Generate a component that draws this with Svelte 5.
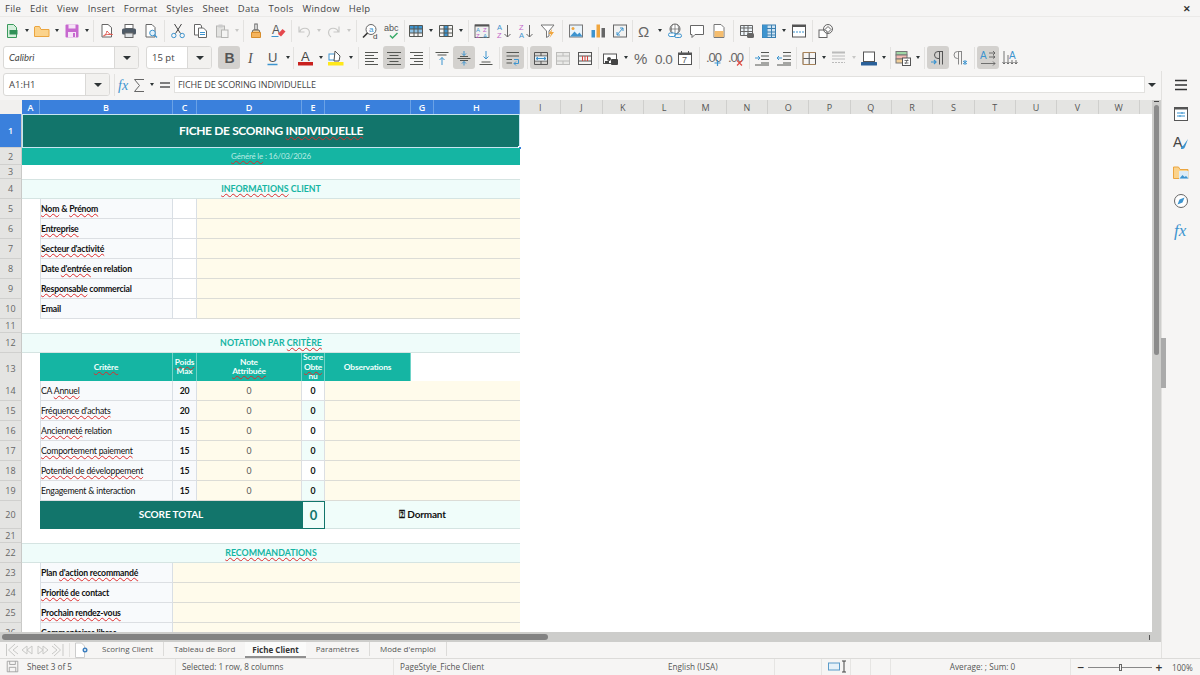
<script>
	const menus = ["File", "Edit", "View", "Insert", "Format", "Styles", "Sheet", "Data", "Tools", "Window", "Help"]

	const blue = "#3d94cf"
	const dark = "#555753"
	const lines = (x1, x2, ys, c = dark) => ys.map((y) => `<path d="M${x1} ${y}H${x2}" stroke="${c}"/>`).join("")
	const table = (c = dark) =>
		`<path d="M1.5 2.5h13v11h-13zM1.5 6h13M1.5 10h13M6 2.5v11M10 2.5v11" fill="none" stroke="${c}"/>`

	const icons = {
		new: `<path d="M3.5 1.5h6l3 3v10h-9z" fill="#d5efdc" stroke="#3a9a5c"/><rect x="5.5" y="7" width="8" height="4.5" fill="#2f9157"/>`,
		open: `<path d="M.5 4V13.5H15V6.5H7L5.5 3.5H1z" fill="#fbd38c" stroke="#eba53f"/>`,
		save: `<rect x="1.5" y="1.5" width="13" height="13" rx="1" fill="#c768cf"/><rect x="4.5" y="1.5" width="7" height="4" fill="#f6e4f7"/><rect x="4" y="9" width="8" height="5.5" fill="#f6e4f7"/><rect x="9" y="10" width="2" height="4" fill="#c768cf"/>`,
		pdf: `<path d="M3 1.5h6l3.5 3v9.5H3z" fill="#fff" stroke="#666"/><path d="M8 8c-1 4-3 5.500-3.500 5 0-1 4-2 9-1.500-2 .5-4-1.500-5.500-3.500" fill="none" stroke="#e0564e"/>`,
		print: `<rect x="4" y="1.500" width="8" height="4" fill="#fff" stroke="#666"/><rect x="1" y="5.500" width="14" height="6" rx="1.500" fill="#4e5a66"/><rect x="4" y="10" width="8" height="4.500" fill="#dfe3e6" stroke="#666"/>`,
		preview: `<path d="M3 1.500h6l3 3v9.500H3z" fill="#fff" stroke="#666"/><circle cx="9.500" cy="10" r="2.800" fill="#e3f1fa" stroke="${blue}"/><path d="M11.500 12l2.500 2.500" stroke="${blue}" stroke-width="1.300"/>`,
		cut: `<path d="M4.500 1l6 9.500M11.500 1l-6 9.500" stroke="#444" fill="none"/><circle cx="3.800" cy="12.500" r="2.200" fill="none" stroke="${blue}"/><circle cx="12.200" cy="12.500" r="2.200" fill="none" stroke="${blue}"/>`,
		copy: `<path d="M2.500 1.500h6l1 1.500v9h-7z" fill="#fff" stroke="#666"/><path d="M6.500 5h5l3 3v6.500h-8z" fill="#fff" stroke="#666"/>${lines(8, 13, [9.500, 11.500], blue)}`,
		paste: `<rect x="2.500" y="3" width="8" height="11" fill="#e3e3e1" stroke="#b5b5b3"/><rect x="4.500" y="1.500" width="4" height="3" fill="#ccc"/><rect x="7.500" y="7" width="6.500" height="7.500" fill="#f4f4f3" stroke="#b5b5b3"/>`,
		clone: `<rect x="6.800" y="1" width="2.400" height="6" fill="#fff" stroke="#666"/><path d="M5 7h6l1 2.500H4z" fill="#f0c98a" stroke="#666"/><path d="M3.500 9.500h9v5h-9z" fill="#f5b45c" stroke="#d78d2c"/>`,
		clear: `<text x="2" y="11" font-size="12" fill="#555">A</text><path d="M1.500 13.500h7" stroke="${blue}"/><path d="M8 11l4.500-5 3 2.500-4.500 5z" fill="#e5484d"/>`,
		undo: `<path d="M4 8.500c1-4 9-5 9.500 1 0 2-1 3.500-2.500 4.500M3 3.500V9h5.500" fill="none" stroke="#c8c8c6" stroke-width="1.200"/>`,
		redo: `<path d="M12 8.500c-1-4-9-5-9.500 1 0 2 1 3.500 2.500 4.500M13 3.500V9H7.500" fill="none" stroke="#c8c8c6" stroke-width="1.200"/>`,
		find: `<circle cx="9" cy="6.500" r="5" fill="#fff" stroke="#666"/><path d="M5.500 10L1 14.500" stroke="#333" stroke-width="1.600"/><text x="7" y="9" font-size="8" fill="${blue}">a</text><text x="11" y="15.500" font-size="8" fill="#444">d</text>`,
		spell: `<text x="0" y="8" font-size="9" fill="#555">abc</text><path d="M6 12.500l2.500 2.500 5-5" fill="none" stroke="#3bab6a" stroke-width="1.500"/>`,
		rows: `<rect x="1.500" y="6" width="13" height="4" fill="#8ec2e6"/><rect x="1.500" y="2.500" width="13" height="3.500" fill="${blue}"/>${table()}`,
		columns: `<rect x="6" y="2.500" width="4" height="11" fill="${blue}"/>${table()}`,
		sort: `<rect x="1" y="2" width="14" height="12.500" fill="#f1f1f0" stroke="#666"/><rect x="1" y="1.500" width="14" height="2" fill="#555"/><text x="2" y="9" font-size="6" fill="#3d94cf">A</text><text x="2" y="14.500" font-size="6" fill="#c264c8">Z</text><text x="9" y="9" font-size="6" fill="#c264c8">Z</text><text x="9" y="14.500" font-size="6" fill="#3d94cf">A</text>`,
		asc: `<text x="1" y="7" font-size="7.500" fill="${blue}">A</text><text x="1" y="15" font-size="7.500" fill="#c264c8">Z</text><path d="M11.500 2v12M8.500 11l3 3 3-3" fill="none" stroke="#666"/>`,
		desc: `<text x="1" y="7" font-size="7.500" fill="#c264c8">Z</text><text x="1" y="15" font-size="7.500" fill="${blue}">A</text><path d="M11.500 2v12M8.500 11l3 3 3-3" fill="none" stroke="#666"/>`,
		filter: `<path d="M1 2h13L9 8v5l-2.500 1.500V8z" fill="#fff" stroke="#777"/><path d="M12 6l-3.500 5h2.500l-1.500 4 4.500-6h-2.500z" fill="#f0a63f"/>`,
		image: `<rect x="1.500" y="2" width="13" height="12" fill="#eaf4fb" stroke="#777"/><circle cx="5" cy="5.500" r="1.500" fill="#f0a63f"/><path d="M2 13.500l4.500-5 3 3 2-2 3 4z" fill="${blue}"/>`,
		chart: `<rect x="1.500" y="7" width="3.500" height="7.500" fill="${blue}"/><rect x="6.500" y="1.500" width="3.500" height="13" fill="#f0a63f"/><rect x="11.500" y="5" width="3.500" height="9.500" fill="#666"/>`,
		pivot: `<rect x="1.500" y="2" width="13" height="12" fill="#f2f2f1" stroke="#666"/><path d="M5 12l6-7M11 5H8M11 5v3M5 12h3M5 12V9" fill="none" stroke="${blue}"/>`,
		omega: `<text x="1" y="14" font-size="15" fill="#666">Ω</text>`,
		link: `<circle cx="8" cy="6" r="5" fill="#fff" stroke="#666"/><path d="M3 6h10M8 1v10M5.500 1.500c-1.500 3-1.500 6 0 9M10.500 1.500c1.500 3 1.500 6 0 9" fill="none" stroke="#666" stroke-width=".7"/><rect x="1.500" y="10" width="7" height="3.500" rx="1.700" fill="#fff" stroke="${blue}"/><rect x="7.500" y="11" width="7" height="3.500" rx="1.700" fill="none" stroke="${blue}"/>`,
		comment: `<path d="M1.500 2.500h13v9H6l-3 3v-3H1.500z" fill="#fff" stroke="#666"/>`,
		headers: `<path d="M3 1.500h7l3 3v10H3z" fill="#fff" stroke="#777"/><rect x="3.500" y="8" width="9" height="6" fill="#f5bd6e"/>`,
		freeze: `<path d="M1.500 2.500h12v10h-12zM1.500 5h12M1.500 8.500h12M5 2.500v10M9 2.500v10" fill="#eef6fb" stroke="#666"/><rect x="8" y="10" width="7" height="5" rx="1.500" fill="#666"/>`,
		freeze2: `<rect x="1.500" y="2" width="13" height="12.500" fill="#cfe4f3" stroke="#3a7fb0"/><path d="M1.500 5.500h13M1.500 9h13M1.500 12h13M6 2v12.500M10.500 2v12.500" stroke="#3a7fb0" fill="none"/><rect x="1.500" y="2" width="4.500" height="12.500" fill="#3d94cf"/>`,
		split: `<rect x="1.500" y="2" width="13" height="12" fill="#fff" stroke="#555"/><rect x="1.500" y="2" width="13" height="2" fill="#555"/><path d="M2 9h12" stroke="${blue}" stroke-dasharray="2 1"/>`,
		shapes: `<rect x="1" y="7" width="8" height="7.500" fill="#fff" stroke="#666"/><circle cx="10" cy="6" r="4.500" fill="none" stroke="#666"/><path d="M10 3.500l3 3-3 3-3-3z" fill="#fff" stroke="#666"/>`,

		bold: `<text x="3.500" y="13" font-size="14" font-weight="700" fill="#555">B</text>`,
		italic: `<text x="5" y="13" font-size="14" font-style="italic" font-family="Liberation Serif" fill="#555">I</text>`,
		under: `<text x="3" y="12" font-size="13" fill="#555">U</text><path d="M2.500 14.500h10" stroke="${blue}" stroke-width="1.500"/>`,
		fcolor: `<text x="3" y="11" font-size="13" fill="#444">A</text><rect x="0" y="12" width="15" height="3.500" fill="#c9211e"/>`,
		bg: `<rect x="0" y="12" width="15.500" height="3.500" fill="#ffe81a"/><rect x="1" y="4" width="6" height="6" fill="#fff" stroke="${blue}"/><path d="M7 1l5 5-1 5H6z" fill="#fff" stroke="#555"/>`,
		left: lines(1, 14, [2.500, 8.500, 14.500]) + lines(1, 10, [5.500, 11.500]),
		center: lines(1, 15, [2.500, 8.500, 14.500]) + lines(3.500, 12.500, [5.500, 11.500]),
		right: lines(2, 15, [2.500, 8.500, 14.500]) + lines(6, 15, [5.500, 11.500]),
		top: lines(1.500, 14.500, [2.500]) + lines(3.500, 12.500, [5]) + `<path d="M8 15V7.500M5.500 10L8 7.500l2.500 2.500" fill="none" stroke="${blue}"/>`,
		mid: lines(1.500, 14.500, [8.500]) + lines(4, 12, [6.500, 10.500]) + `<path d="M8 1v4.500M6 3.500l2 2 2-2M8 15.500v-4M6 13.500l2-2 2 2" fill="none" stroke="${blue}"/>`,
		bot: lines(1.500, 14.500, [14.500]) + lines(3.500, 12.500, [12]) + `<path d="M8 1v8M5.500 6.500L8 9l2.500-2.500" fill="none" stroke="${blue}"/>`,
		wrap: lines(1.500, 14, [2.500, 6]) + lines(1.500, 7, [9.500, 13]) + `<path d="M9 9.500h4.500v4H9M11 11.500l-2 2 2 2" fill="none" stroke="${blue}"/>`,
		merge: `<path d="M1.500 2.500h13v12h-13zM1.500 6h13M1.500 11h13M8 2.500V6M8 11v3.500" fill="none" stroke="#555"/><rect x="2" y="6.500" width="12" height="4" fill="#e9f3fa"/><path d="M3 8.500h10M5 7l-2 1.500L5 10M11 7l2 1.500L11 10" stroke="${blue}" fill="none"/>`,
		merge2: `<rect x="1.500" y="2.500" width="13" height="12" fill="#e9e9e7" stroke="#bcbcba"/><path d="M1.500 6h13M1.500 11h13M8 2.500V6M8 11v3.500" stroke="#bcbcba"/>`,
		unmerge: `<rect x="1.500" y="2.500" width="13" height="12" fill="none" stroke="#555"/><path d="M1.500 6h13M1.500 11h13" stroke="#555"/><path d="M5.500 6v5M8 6v5M10.500 6v5" stroke="#d9423b"/>`,
		cur: `<rect x=".5" y="4" width="13" height="9.500" fill="#fff" stroke="#555"/><circle cx="6" cy="9" r="2" fill="#444"/><rect x="8" y="9" width="7" height="6" rx="1" fill="#444"/><rect x="2" y="11" width="4" height="3" fill="#444"/>`,
		pct: `<text x="1" y="14" font-size="15" font-weight="300" fill="#666">%</text>`,
		zero: `<text x="0" y="14" font-size="13.500" letter-spacing="-.5" fill="#666">0.0</text>`,
		date: `<rect x="1.500" y="3" width="13" height="11.500" fill="#fff" stroke="#555"/><rect x="1.500" y="3" width="13" height="2" fill="#555"/><path d="M4.500 1v3M11.500 1v3" stroke="#555"/><text x="5" y="13" font-size="9" fill="#555">7</text>`,
		add: `<text x="0" y="12" font-size="13" letter-spacing="-1" fill="#666">.00</text><path d="M11.500 10v6M8.500 13h6" stroke="${blue}" stroke-width="1.200"/>`,
		del: `<text x="0" y="12" font-size="13" letter-spacing="-1" fill="#666">.00</text><path d="M9 10.500l5 5M14 10.500l-5 5" stroke="#e04b44" stroke-width="1.200"/>`,
		indent: lines(7, 15, [2.500, 6, 9.500, 13]) + lines(1, 15, [15]) + `<path d="M1 8h5M4 6l2 2-2 2" fill="none" stroke="${blue}"/>`,
		outdent: lines(7, 15, [2.500, 6, 9.500, 13]) + lines(1, 15, [15]) + `<path d="M6 8H1M3 6L1 8l2 2" fill="none" stroke="${blue}"/>`,
		borders: `<path d="M2 2.500h12.500v12H2zM8.200 2.500v12M2 8.500h12.500" fill="none" stroke="#555"/><path d="M2 2.500h12.500M2 14.500h12.500M2 2.500v12" stroke="#e0a25b" fill="none" opacity=".6"/>`,
		bstyle: `<path d="M1 2.500h13" stroke="#bbb" stroke-width="2"/><path d="M1 6h13M1 9h13" stroke="#bbb"/><path d="M1 12.500h13" stroke="#bbb" stroke-dasharray="2 1"/>`,
		bcolor: `<rect x="2.500" y="2" width="11" height="9.500" fill="#fff" stroke="#555"/><rect x="0" y="12" width="16" height="3.500" rx=".5" fill="#2a6099"/>`,
		cond: `<rect x="1" y="1.500" width="11" height="3.500" fill="#9fd6a5" stroke="#777"/><rect x="1" y="5" width="11" height="4" fill="#f3b9b3" stroke="#777"/><rect x="1" y="9" width="8" height="4" fill="#f1cf9a" stroke="#777"/><rect x="7.500" y="8" width="8" height="7.500" fill="#fff" stroke="#555"/><path d="M9.500 10.500h4M9.500 13h4M12.500 9.500l-2 4.500" stroke="#555" fill="none" stroke-width=".8"/>`,
		ltr: `<path d="M13 1.500H8a3.500 3.500 0 0 0 0 7h1M9.500 1.500v13M12.500 1.500v13" fill="none" stroke="#555"/><path d="M1 12h5M4 10l2 2-2 2" fill="none" stroke="${blue}" stroke-width="1.200"/>`,
		rtl: `<path d="M10 1.500H5.500a3.500 3.500 0 0 0 0 7h1M6.500 1.500v13M9.500 1.500v13" fill="none" stroke="#888"/><path d="M11 11l4 3M15 11l-4 3M13 10v5" stroke="${blue}"/>`,
		hor: `<text x="0" y="9" font-size="10" fill="${blue}">A</text><path d="M9 3h6M13 1l2 2-2 2M9 7h6M13 5.500l2 1.500-2 1.500M1 13.500h14M13 11.500l2 2-2 2" fill="none" stroke="#555" stroke-width=".8"/>`,
		ver: `<text x="7" y="9" font-size="10" fill="${blue}">A</text><path d="M2 1v13M.5 12L2 14l1.500-2M6 5v9M4.500 12L6 14l1.500-2M10 10v4M8.500 12l1.500 2 1.500-2M14 10v4M12.500 12l1.500 2 1.500-2" fill="none" stroke="#555" stroke-width=".8"/>`,

		fx: `<text x="1" y="13" font-size="14" font-style="italic" font-family="Liberation Serif" fill="${blue}">fx</text>`,
		sum: `<path d="M13 2.500H3.500L8.500 8.500l-5 6H13" fill="none" stroke="#666"/>`,
		eq: `<path d="M3 6h10M3 10h10" stroke="#555" stroke-width="1.300"/>`,
		menu: `<path d="M2 3.500h12M2 8h12M2 12.500h12" stroke="#333" stroke-width="1.400"/>`,
		props: `<rect x="1.500" y="1.500" width="13" height="13" fill="#fff" stroke="#555"/><rect x="1.500" y="1.500" width="13" height="2" fill="#555"/><path d="M4 7h8M4 10h8" stroke="${blue}"/><path d="M9 6v2M7 9v2" stroke="${blue}"/>`,
		styles: `<text x="0" y="12" font-size="14" fill="#444">A</text><path d="M8 14c0-3 1-3 2-3l5-7-3 8c-1 2-2 2-4 2" fill="${blue}"/>`,
		gallery: `<path d="M.5 3v11.500H15V5.500H7L5.500 3z" fill="#fbd38c" stroke="#eba53f"/><rect x="6" y="7" width="9.500" height="8" fill="#dcecf7"/><path d="M6.500 14.500l3-3.500 2 2 1.500-1 2.500 2.500z" fill="${blue}"/>`,
		nav: `<circle cx="8" cy="8" r="6.500" fill="#fff" stroke="#666"/><path d="M11.500 4.500L9.500 9.500 4.500 11.500 6.500 6.500z" fill="${blue}"/>`,
		fxs: `<text x="1" y="14" font-size="17" font-style="italic" font-family="Liberation Serif" fill="${blue}">fx</text>`,
	}

	const tb1 = [
		"new", "dd", "open", "dd", "save", "dd", 5, "pdf", "print", "preview", 5, "cut", "copy", "paste", "dx", 4,
		"clone", "clear", 4, "undo", "dx", "redo", "dx", 6, "find", "spell", 2, "rows", "dd", "columns", "dd", 6,
		"sort", "asc", "desc", "filter", 6, "image", "chart", "pivot", 3, "omega", "dd", "link", "comment", "headers", 6,
		"freeze", "freeze2", "dd", "split", 5, "shapes",
	]
	const tb2 = [
		"bold", "italic", "under", "dd", 3, "fcolor", "dd", "bg", "dd", 6, "left", "center", "right", 4, "top", "mid", "bot", 5,
		"wrap", 6, "merge", "merge2", "unmerge", 4, "cur", "dd", "pct", "zero", "date", 7, "add", "del", 4, "indent", "outdent", 3,
		"borders", "dd", "bstyle", "dx", "bcolor", "dd", 4, "cond", "dd", 5, "ltr", "rtl", 6, "hor", "ver",
	]
	const active = ["bold", "center", "mid", "wrap", "merge", "ltr", "hor"]
	const sideIcons = ["props", "styles", "gallery", "nav", "fxs"]

	const cols = [
		["A", 18], ["B", 133], ["C", 24], ["D", 105], ["E", 23], ["F", 86], ["G", 23], ["H", 86],
	]
	const restCols = "IJKLMNOPQRSTUVW".split("")

	const section = (n, t) => ({ n, h: 20, cells: [{ s: 8, k: "section", t }] })
	const blank = (n) => ({ n, h: 14, cells: [] })
	const info = (n, t) => ({
		n, h: 20,
		cells: [{ s: 1 }, { s: 1, k: "label bold", t }, { s: 1, k: "plain" }, { s: 5, k: "entry" }],
	})
	const crit = (n, t, max) => ({
		n, h: 20,
		cells: [
			{ s: 1 },
			{ s: 1, k: "label", t },
			{ s: 1, k: "label num", t: max },
			{ s: 1, k: "entry mid", t: "0" },
			{ s: 1, k: n % 2 ? "score" : "score odd", t: "0" },
			{ s: 3, k: "entry" },
		],
	})
	const reco = (n, t) => ({
		n, h: 20,
		cells: [{ s: 1 }, { s: 1, k: "label bold", t }, { s: 6, k: "entry" }],
	})

	const rows = [
		{ n: 1, h: 34, sel: true, cells: [{ s: 8, k: "title", t: "FICHE DE SCORING ~INDIVIDUELLE~" }] },
		{ n: 2, h: 17, cells: [{ s: 8, k: "dated", t: "~Généré le~ : 16/03/2026" }] },
		blank(3),
		section(4, "~INFORMATIONS~ CLIENT"),
		info(5, "~Nom~ & ~Prénom~"),
		info(6, "~Entreprise~"),
		info(7, "~Secteur d'activité~"),
		info(8, "Date ~d'entrée~ en relation"),
		info(9, "~Responsable~ commercial"),
		info(10, "Email"),
		blank(11),
		section(12, "NOTATION PAR ~CRITÈRE~"),
		{
			n: 13, h: 28,
			cells: [
				{ s: 1 },
				{ s: 1, k: "head", t: "~Critère~" },
				{ s: 1, k: "head", t: "~Poids~\nMax" },
				{ s: 1, k: "head", t: "Note\n~Attribuée~" },
				{ s: 1, k: "head", t: "Score\n~Obte~\n~nu~" },
				{ s: 1, k: "head", t: "Observations" },
			],
		},
		crit(14, "CA ~Annuel~", "20"),
		crit(15, "~Fréquence d'achats~", "20"),
		crit(16, "~Ancienneté~ relation", "15"),
		crit(17, "~Comportement paiement~", "15"),
		crit(18, "~Potentiel de développement~", "15"),
		crit(19, "Engagement & interaction", "15"),
		{
			n: 20, h: 28,
			cells: [
				{ s: 1 },
				{ s: 3, k: "total", t: "SCORE TOTAL" },
				{ s: 1, k: "totalScore", t: "0" },
				{ s: 3, k: "rating", t: "⍰ Dormant" },
			],
		},
		blank(21),
		section(22, "~RECOMMANDATIONS~"),
		reco(23, "Plan ~d'action recommandé~"),
		reco(24, "~Priorité de~ contact"),
		reco(25, "~Prochain rendez-vous~"),
		reco(26, "Commentaires libres"),
	]

	const tabs = ["Scoring Client", "Tableau de Bord", "Fiche Client", "Paramètres", "Mode d'emploi"]
</script>

{#snippet bar(items)}
	{#each items as it}
		{#if typeof it === "number"}
			<span class="sep" style="width:{it}px"></span>
		{:else if it === "dd"}
			<span class="dd"></span>
		{:else if it === "dx"}
			<span class="dd off"></span>
		{:else}
			<span class="btn" class:on={active.includes(it)}>
				<svg width="16" height="16" viewBox="0 0 16 16">{@html icons[it]}</svg>
			</span>
		{/if}
	{/each}
{/snippet}

{#snippet txt(s)}
	{#each s.split("~") as part, i}
		{#if i % 2}<span class="wavy">{part}</span>{:else}{part}{/if}
	{/each}
{/snippet}

<div class="app">
	<div class="menubar">
		{#each menus as m}<span>{m}</span>{/each}
		<span class="close">✕</span>
	</div>

	<div class="toolbar first">
		{@render bar(tb1)}
	</div>

	<div class="toolbar second">
		<div class="combo font"><span class="value">Calibri</span><span class="arrow"></span></div>
		<div class="combo size"><span class="value">15 pt</span><span class="arrow"></span></div>
		{@render bar(tb2)}
	</div>

	<div class="body">
		<div class="workspace">
			<div class="formula">
				<div class="combo name"><span class="value">A1:H1</span><span class="arrow"></span></div>
				<span class="sep formula-sep"></span>
				<svg class="fbtn" width="16" height="16" viewBox="0 0 16 16">{@html icons.fx}</svg>
				<svg class="fbtn" width="16" height="16" viewBox="0 0 16 16">{@html icons.sum}</svg>
				<span class="dd small"></span>
				<svg class="fbtn" width="16" height="16" viewBox="0 0 16 16">{@html icons.eq}</svg>
				<div class="fx-input">FICHE DE SCORING INDIVIDUELLE</div>
				<span class="dd wide"></span>
			</div>

			<div class="viewport">
				<div class="sheet">
					<div class="colhead">
						<span class="corner"></span>
						{#each cols as [c, w]}
							<span class="col sel" style="width:{w}px">{c}</span>
						{/each}
						{#each restCols as c}
							<span class="col rest">{c}</span>
						{/each}
					</div>

					{#each rows as r}
						<div class="row" style="height:{r.h}px">
							<span class="rh" class:sel={r.sel}>{r.n}</span>
							{#each r.cells as c}
								<div class="cell {c.k ?? ''}" style="grid-column:span {c.s}">
									{#if c.t}<span class="t">{@render txt(c.t)}</span>{/if}
								</div>
							{/each}
							{#if r.sel}<span class="handle"></span>{/if}
						</div>
					{/each}
				</div>
				<div class="vscroll"><span class="tick"></span><span class="vthumb"></span></div>
			</div>

			<div class="hscroll"><span class="hthumb"></span><span class="hend"></span></div>

			<div class="tabbar">
				<svg class="tabnav" width="60" height="16" viewBox="0 0 60 16">
					<g fill="none" stroke="#c9c9c7">
						<path d="M1.500 2v12M10 2L3.500 8l6.500 6M13 4L8 8l5 4" />
						<path d="M22 4l-5 4 5 4zM27 4l-5 4 5 4z" />
						<path d="M33 4l5 4-5 4zM38 4l5 4-5 4z" />
						<path d="M49 2l6.500 6-6.500 6M47 4l5 4-5 4M58 2v12" />
					</g>
				</svg>
				<span class="sep tabsep"></span>
				<svg class="newtab" width="16" height="16" viewBox="0 0 16 16">
					<path d="M1.500 1h6l3 3v11.500h-9z" fill="#fff" stroke="#ccc" />
					<circle cx="11" cy="8" r="2.500" fill="#3d7fc0" />
					<circle cx="11" cy="8" r="1" fill="#fff" />
				</svg>
				{#each tabs as t, i}
					<span class="tab" class:current={i === 2} class:before={i === 1}>{t}</span>
				{/each}
			</div>
		</div>

		<div class="sidebar">
			<span class="splitter"></span>
			<svg width="16" height="16" viewBox="0 0 16 16">{@html icons.menu}</svg>
			{#each sideIcons as s}
				<svg width="16" height="16" viewBox="0 0 16 16">{@html icons[s]}</svg>
			{/each}
		</div>
	</div>

	<div class="status">
		<span class="st s1">
			<svg width="13" height="13" viewBox="0 0 16 16">
				<path d="M1.500 1.500h13v13h-13zM4.500 1.500v4h7v-4M4 14.500V9h8v5.500" fill="none" stroke="#999" />
			</svg>
			Sheet 3 of 5
		</span>
		<span class="st s2">Selected: 1 row, 8 columns</span>
		<span class="st s3">PageStyle_Fiche Client</span>
		<span class="st s4">English (USA)</span>
		<span class="st s5"></span>
		<span class="st s6">
			<svg width="22" height="13" viewBox="0 0 22 13">
				<rect x="1.500" y="3" width="11" height="7" fill="#e6f1f8" stroke="#5b9bc9" />
				<path d="M15 1h4M15 12h4M17 1v11" stroke="#444" fill="none" />
			</svg>
		</span>
		<span class="st s7"></span>
		<span class="st s8"></span>
		<span class="st s9">Average: ; Sum: 0</span>
		<span class="zoom">
			<span class="zbtn">−</span>
			<span class="slider"><span class="knob"></span></span>
			<span class="zbtn">+</span>
			<span class="pc">100%</span>
		</span>
	</div>
</div>

<style>
	:global(body) {
		margin: 0;
		background: #f6f5f4;
	}

	.app {
		width: 1200px;
		height: 675px;
		overflow: hidden;
		display: flex;
		flex-direction: column;
		background: #f6f5f4;
		color: #3d3d3d;
		font-family: "Open Sans", "Noto Sans", sans-serif;
		font-size: 9.5px;
	}

	.menubar {
		height: 17px;
		flex: none;
		display: flex;
		align-items: center;
		gap: 9px;
		padding-left: 5px;
		font-size: 9.5px;
		letter-spacing: 0.25px;
		border-bottom: 1px solid #ebeae8;
		box-sizing: border-box;
		color: #444;
	}

	.close {
		margin-left: auto;
		margin-right: 9px;
		font-size: 9px;
		font-weight: 700;
		color: #333;
	}

	.toolbar {
		flex: none;
		height: 27px;
		display: flex;
		align-items: center;
		box-sizing: border-box;
		padding-left: 1px;
	}

	.toolbar.second {
		padding-left: 3px;
	}

	.btn {
		flex: none;
		width: 22px;
		height: 23.5px;
		display: flex;
		align-items: center;
		justify-content: center;
		border-radius: 3px;
	}

	.btn.on {
		background: #d3d1ce;
	}

	.btn svg,
	.fbtn,
	.sidebar svg {
		font-family: "Liberation Sans", sans-serif;
		overflow: visible;
	}

	.sep {
		flex: none;
		height: 22px;
		display: flex;
		justify-content: center;
	}

	.sep::before {
		content: "";
		width: 1px;
		background: #e3e2e0;
	}

	.dd {
		flex: none;
		width: 8px;
		display: flex;
		justify-content: center;
	}

	.dd::before {
		content: "";
		border-left: 2.5px solid transparent;
		border-right: 2.5px solid transparent;
		border-top: 3px solid #2e3436;
	}

	.dd.off::before {
		border-top-color: #c8c8c6;
	}

	.combo {
		flex: none;
		height: 23px;
		display: flex;
		box-sizing: border-box;
		background: #fff;
		border: 1px solid #dad9d7;
		border-radius: 3px;
		overflow: hidden;
	}

	.combo .value {
		flex: 1;
		display: flex;
		align-items: center;
		padding-left: 5px;
		color: #444;
	}

	.combo .arrow {
		flex: none;
		width: 23px;
		display: flex;
		align-items: center;
		justify-content: center;
		background: #f2f1ef;
		border-left: 1px solid #dad9d7;
	}

	.combo .arrow::before {
		content: "";
		border-left: 4px solid transparent;
		border-right: 4px solid transparent;
		border-top: 4px solid #2e3436;
	}

	.combo.font {
		width: 136px;
		margin-right: 7px;
	}

	.combo.font .value {
		font-family: Lato, sans-serif;
		font-style: italic;
		font-size: 9.5px;
	}

	.combo.size {
		width: 66px;
		margin-right: 6px;
	}

	.combo.name {
		width: 107px;
		margin-left: 3px;
	}

	.body {
		flex: 1;
		min-height: 0;
		display: flex;
	}

	.workspace {
		width: 1161px;
		flex: none;
		display: flex;
		flex-direction: column;
		min-height: 0;
	}

	.formula {
		flex: none;
		height: 29px;
		display: flex;
		align-items: center;
		padding-bottom: 2px;
		box-sizing: border-box;
	}

	.formula-sep {
		width: 8px;
	}

	.fbtn {
		flex: none;
		margin: 0 -1px;
	}

	.dd.small {
		margin-left: 2px;
		margin-right: 2px;
	}

	.fx-input {
		flex: 1;
		height: 17px;
		margin-left: 2px;
		padding: 0 0 1px 3px;
		display: flex;
		align-items: center;
		background: #fff;
		border: 1px solid #e2e1df;
		box-sizing: border-box;
		font-size: 9px;
		letter-spacing: -0.1px;
		color: #444;
	}

	.dd.wide {
		width: 14px;
		margin-right: 2px;
	}

	.dd.wide::before {
		border-left-width: 4px;
		border-right-width: 4px;
		border-top-width: 4px;
	}

	.viewport {
		flex: none;
		height: 532px;
		display: flex;
	}

	.sheet {
		width: 1152px;
		flex: none;
		overflow: hidden;
		background: #fff;
		color: #111;
		font-family: Lato, "Liberation Sans", sans-serif;
		font-size: 8.7px;
		letter-spacing: -0.2px;
	}

	.colhead {
		height: 14px;
		display: flex;
		font-family: "Open Sans", sans-serif;
		font-size: 9px;
		letter-spacing: 0;
		background: #e4e4e2;
	}

	.corner {
		flex: none;
		width: 22px;
		background: #f1f0ee;
	}

	.col {
		flex: none;
		box-sizing: border-box;
		display: flex;
		align-items: center;
		justify-content: center;
		border-right: 1px solid #cfcfcd;
	}

	.col.sel {
		background: #3a80dc;
		color: #fff;
		font-weight: 600;
		border-right-color: #6aa2e6;
	}

	.col.rest {
		width: 41.33px;
		color: #555;
	}

	.row {
		position: relative;
		display: grid;
		grid-template-columns: 22px 18px 133px 24px 105px 23px 86px 23px 86px;
	}

	.rh {
		display: flex;
		align-items: center;
		justify-content: center;
		box-sizing: border-box;
		background: #e4e4e2;
		border-bottom: 1px solid #d0d0ce;
		border-right: 1px solid #c9c9c7;
		color: #666;
		font-family: "Open Sans", sans-serif;
		font-size: 9px;
		letter-spacing: 0;
	}

	.rh.sel {
		background: #3a80dc;
		color: #fff;
		font-weight: 600;
	}

	.cell {
		min-width: 0;
		display: flex;
		align-items: center;
		justify-content: center;
		box-sizing: border-box;
		text-align: center;
		white-space: pre-line;
	}

	.t {
		display: block;
	}

	.wavy {
		text-decoration: underline wavy #dd2c2c 0.8px;
		text-decoration-skip-ink: none;
		text-underline-offset: 1px;
	}

	.title {
		background: #12756b;
		color: #fff;
		font-weight: 700;
		font-size: 12px;
		letter-spacing: -0.35px;
		box-shadow: inset 0 0 0 1px #c8e6f2;
		padding-bottom: 2px;
	}

	.dated {
		background: #15b5a3;
		color: #b9ece3;
		font-size: 8px;
		letter-spacing: -0.2px;
		padding-bottom: 2px;
	}

	.section {
		background: #effcfa;
		color: #15b5a3;
		font-weight: 700;
		font-size: 8.8px;
		letter-spacing: 0;
		border-top: 1px solid #d5e4e2;
		border-bottom: 1px solid #d5e4e2;
		padding-bottom: 2px;
	}

	.label {
		justify-content: flex-start;
		background: #f8fafc;
		border-left: 1px solid #d9dfe5;
		border-right: 1px solid #d9dfe5;
		border-bottom: 1px solid #dcdfe3;
		white-space: nowrap;
	}

	.label.bold {
		font-weight: 700;
	}

	.label.num {
		justify-content: center;
		font-weight: 700;
		border-left: 0;
	}

	.plain {
		border-right: 1px solid #d9dfe5;
		border-bottom: 1px solid #dcdfe3;
	}

	.entry {
		background: #fffbeb;
		border-bottom: 1px solid #dcdcd6;
		color: #555;
	}

	.entry.mid {
		border-right: 1px solid #dcdfe3;
	}

	.score {
		background: #f0fdfa;
		font-weight: 700;
		border-right: 1px solid #dcdfe3;
		border-bottom: 1px solid #dcdfe3;
	}

	.score.odd {
		background: #fff;
	}

	.head {
		background: #15b5a3;
		color: #f2fffc;
		font-weight: 700;
		font-size: 8.4px;
		line-height: 9.5px;
		border-right: 1px solid #6ed3c7;
		border-bottom: 1px solid #d5e4e2;
		padding-bottom: 2px;
	}

	.total {
		background: #12756b;
		color: #fff;
		font-weight: 700;
		font-size: 10px;
		letter-spacing: -0.1px;
		padding-bottom: 2px;
	}

	.totalScore {
		background: #f0fdfa;
		color: #12756b;
		font-weight: 700;
		font-size: 13px;
		border: 1.5px solid #12756b;
	}

	.rating {
		background: #f0fdfa;
		font-weight: 700;
		font-size: 10px;
		border-bottom: 1px solid #d5e4e2;
		font-family: Lato, "DejaVu Sans", sans-serif;
	}

	.handle {
		position: absolute;
		left: 518px;
		bottom: -2px;
		width: 4px;
		height: 4px;
		background: #3a80dc;
		border: 0.5px solid #fff;
		box-sizing: border-box;
	}

	.vscroll {
		flex: 1;
		position: relative;
		background: #cdcdcb;
	}

	.tick {
		position: absolute;
		top: 1px;
		left: 2px;
		width: 5px;
		height: 1px;
		background: #444;
	}

	.vthumb {
		position: absolute;
		left: 1.5px;
		top: 5px;
		width: 5.5px;
		height: 250px;
		border-radius: 3px;
		background: #8b8b8b;
	}

	.hscroll {
		flex: none;
		height: 10px;
		position: relative;
		background: #cdcdcb;
	}

	.hthumb {
		position: absolute;
		left: 2px;
		top: 2px;
		width: 546px;
		height: 6px;
		border-radius: 3px;
		background: #828282;
	}

	.hend {
		position: absolute;
		left: 1149px;
		top: 3px;
		width: 1px;
		height: 5px;
		background: #555;
	}

	.tabbar {
		flex: none;
		height: 16px;
		display: flex;
		align-items: center;
		padding-left: 5px;
		font-size: 8px;
		color: #555;
	}

	.tabnav {
		flex: none;
	}

	.sep.tabsep {
		width: 9px;
		height: 14px;
	}

	.newtab {
		flex: none;
		margin-right: 2px;
	}

	.tab {
		flex: none;
		height: 14px;
		display: flex;
		align-items: center;
		box-sizing: border-box;
		padding: 0 10px 1px;
		border-right: 1px solid #dcdbd9;
		margin-bottom: 2px;
	}

	.tab.before {
		border-right: 0;
	}

	.tab.current {
		height: 16px;
		margin-bottom: 0;
		font-weight: 700;
		color: #333;
		background: #fbfbfa;
		border-bottom: 2px solid #909090;
		border-right: 0;
		padding: 0 7px;
	}

	.sidebar {
		flex: 1;
		position: relative;
		display: flex;
		flex-direction: column;
		align-items: center;
		gap: 13px;
		padding-top: 6px;
		border-left: 1px solid #e2e1df;
	}

	.splitter {
		position: absolute;
		left: -1px;
		top: 267px;
		width: 5px;
		height: 50px;
		background: #aaa;
	}

	.status {
		flex: none;
		height: 17px;
		display: flex;
		align-items: center;
		box-sizing: border-box;
		border-top: 1px solid #dcdbd9;
		font-size: 8.2px;
		color: #555;
	}

	.st {
		height: 100%;
		box-sizing: border-box;
		flex: none;
		display: flex;
		align-items: center;
		padding-bottom: 1px;
		border-right: 1px solid #e6e5e3;
	}

	.s1 {
		width: 176px;
		padding-left: 6px;
		gap: 8px;
	}
	.s2 {
		width: 218px;
		padding-left: 6px;
	}
	.s3 {
		width: 262px;
		padding-left: 6px;
		border-right: 0;
	}
	.s4 {
		width: 119px;
		padding-left: 12px;
	}
	.s5 {
		width: 47px;
	}
	.s6 {
		width: 29px;
		padding-left: 5px;
	}
	.s7 {
		width: 20px;
	}
	.s8 {
		width: 20px;
	}
	.s9 {
		width: 180px;
		padding-left: 4px;
		justify-content: center;
	}

	.zoom {
		flex: 1;
		display: flex;
		align-items: center;
		padding-left: 5px;
	}

	.zbtn {
		font-size: 12px;
		font-weight: 600;
		color: #333;
		width: 10px;
		text-align: center;
	}

	.slider {
		position: relative;
		width: 64px;
		height: 1px;
		background: #888;
		margin: 0 2px;
	}

	.knob {
		position: absolute;
		left: 31px;
		top: -3px;
		width: 3px;
		height: 7px;
		box-sizing: border-box;
		background: #f6f5f4;
		border: 1px solid #666;
	}

	.pc {
		margin-left: 8px;
	}
</style>
